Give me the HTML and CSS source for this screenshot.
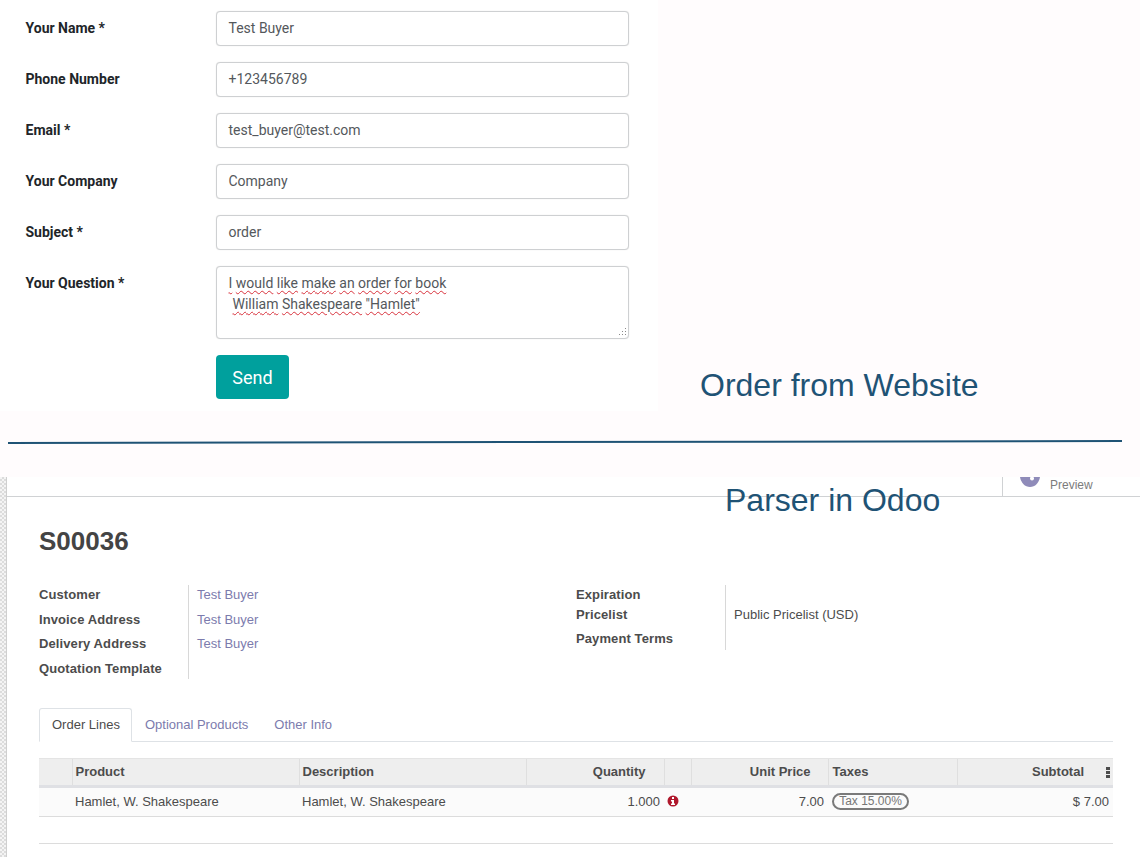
FILE: index.html
```html
<!DOCTYPE html>
<html lang="en">
<head>
<meta charset="utf-8">
<title>Order from Website</title>
<link rel="stylesheet" href="styles.css">
</head>
<body>
<section class="website">
  <form class="contact">
    <div class="field"><label class="field-label">Your Name *</label><div class="input">Test Buyer</div></div>
    <div class="field"><label class="field-label">Phone Number</label><div class="input">+123456789</div></div>
    <div class="field"><label class="field-label">Email *</label><div class="input">test_buyer@test.com</div></div>
    <div class="field"><label class="field-label">Your Company</label><div class="input">Company</div></div>
    <div class="field"><label class="field-label">Subject *</label><div class="input">order</div></div>
    <div class="field"><label class="field-label">Your Question *</label>
      <div class="input textarea">
        <div class="ta-line"><span class="misspelt">I</span> <span class="misspelt">would</span> <span class="misspelt">like</span> <span class="misspelt">make</span> <span class="misspelt">an</span> <span class="misspelt">order</span> <span class="misspelt">for</span> <span class="misspelt">book</span></div>
        <div class="ta-line ta-indent"><span class="misspelt">William</span> <span class="misspelt">Shakespeare</span> <span class="misspelt">"Hamlet"</span></div>
        <svg class="grip" width="10" height="10" viewBox="0 0 10 10"><g fill="#8a8a8a"><rect x="8" y="1" width="1" height="1"/><rect x="8" y="4" width="1" height="1"/><rect x="5" y="4" width="1" height="1"/><rect x="8" y="7" width="1" height="1"/><rect x="5" y="7" width="1" height="1"/><rect x="2" y="7" width="1" height="1"/></g></svg>
      </div>
    </div>
    <div class="field send-row"><span></span><button type="button" class="send">Send</button></div>
  </form>
  <h2 class="note note-order">Order from Website</h2>
  <svg class="divider" width="1140" height="7" viewBox="0 0 1140 7"><line x1="8" y1="5" x2="1122" y2="3" stroke="#1f5375" stroke-width="2"/></svg>
</section>

<section class="odoo">
  <div class="strip"></div>
  <div class="app">
    <div class="statbar">
      <div class="stat">
        <svg class="eye" width="20" height="10" viewBox="0 0 20 10"><path d="M0 0H20C19 6 15 10 10 10C5 10 1 6 0 0Z" fill="#8f8bb9"/><circle cx="12" cy="1.5" r="2" fill="#fff"/></svg>
        <span class="stat-text">Preview</span>
      </div>
    </div>
    <h2 class="note note-parser">Parser in Odoo</h2>
    <div class="sheet">
      <h1 class="order-no">S00036</h1>
      <div class="groups">
        <div class="group group-left">
          <div class="labels">
            <div>Customer</div><div>Invoice Address</div><div>Delivery Address</div><div>Quotation Template</div>
          </div>
          <div class="values">
            <div><a class="link">Test Buyer</a></div><div><a class="link">Test Buyer</a></div><div><a class="link">Test Buyer</a></div><div></div>
          </div>
        </div>
        <div class="group group-right">
          <div class="labels">
            <div>Expiration</div><div>Pricelist</div><div>Payment Terms</div>
          </div>
          <div class="values">
            <div></div><div>Public Pricelist (USD)</div><div></div>
          </div>
        </div>
      </div>
      <div class="tabs">
        <a class="tab tab-active">Order Lines</a>
        <a class="tab">Optional Products</a>
        <a class="tab">Other Info</a>
      </div>
      <table class="lines">
        <thead>
          <tr>
            <th class="c-handle"></th>
            <th class="c-product">Product</th>
            <th class="c-desc">Description</th>
            <th class="c-qty num">Quantity</th>
            <th class="c-info"></th>
            <th class="c-price num">Unit Price</th>
            <th class="c-tax">Taxes</th>
            <th class="c-sub num">Subtotal<svg class="kebab" width="4" height="11" viewBox="0 0 4 11"><g fill="#4c4c4c"><rect width="4" height="3" y="0"/><rect width="4" height="3" y="4"/><rect width="4" height="3" y="8"/></g></svg></th>
          </tr>
        </thead>
        <tbody>
          <tr>
            <td></td>
            <td>Hamlet, W. Shakespeare</td>
            <td>Hamlet, W. Shakespeare</td>
            <td class="num">1.000</td>
            <td class="info-cell"><svg class="info" width="12" height="12" viewBox="0 0 12 12"><circle cx="6" cy="6" r="5.5" fill="#b0182c"/><rect x="5" y="2" width="2" height="2" fill="#fff"/><path d="M4 5H7V8.5H8V10H4V8.5H5V6.5H4Z" fill="#fff"/></svg></td>
            <td class="num">7.00</td>
            <td class="tax-cell"><span class="pill">Tax 15.00%</span></td>
            <td class="num">$ 7.00</td>
          </tr>
        </tbody>
      </table>
      <div class="table-foot"></div>
    </div>
  </div>
</section>
</body>
</html>
```
FILE: styles.css
```css
* { box-sizing: border-box; }
html, body { margin: 0; padding: 0; background: #fff; }
body { width: 1140px; height: 857px; overflow: hidden; font-family: "Liberation Sans", Arial, sans-serif; }

.website { position: relative; height: 477px; background: #fffcfd; }
.contact { width: 658px; height: 411px; background: #fff; padding: 11px 29px 0 25.5px; display: flex; flex-direction: column; gap: 16px; font-family: Roboto, sans-serif; font-size: 14px; color: #4c4c4c; }
.field { display: grid; grid-template-columns: 190.5px 413px; }
.field-label { font-weight: 700; color: #212529; line-height: 35px; height: 35px; }
.input { height: 35px; border: 1px solid #ced0d2; border-radius: 4px; background: #fff; padding: 0 11.5px; line-height: 33px; color: #54585c; box-shadow: 0 0 1px #d8d8d8; }
.textarea { position: relative; height: 73px; padding: 6px 11.5px; line-height: 21px; }
.ta-line { height: 21px; }
.ta-indent { padding-left: 4px; }
.misspelt { text-decoration: underline wavy #d8323c 1px; text-underline-offset: 2px; }
.grip { position: absolute; right: 1px; bottom: 1px; }
.send { width: 73px; height: 44px; border: 0; border-radius: 4px; background: #00a09d; color: #fff; font-family: Roboto, sans-serif; font-size: 18px; padding: 0; }

.note { position: absolute; margin: 0; font-family: "Liberation Sans", Arial, sans-serif; font-weight: 400; font-size: 32px; line-height: 36px; color: #1f5375; white-space: nowrap; }
.note-order { left: 700px; top: 367px; }
.note-parser { left: 718px; top: 5px; z-index: 2; }
.divider { position: absolute; left: 0; top: 438px; }

.odoo { display: flex; height: 380px; }
.strip { width: 7px; flex: none; border-right: 1px solid #cfcfcf; background: repeating-conic-gradient(#dcdcdc 0 25%, #f4f4f4 0 50%) 0 0 / 4px 4px; }
.app { position: relative; flex: 1; min-width: 0; overflow: hidden; }
.statbar { height: 20px; border-bottom: 1px solid #d0d2d4; display: flex; justify-content: flex-end; padding-right: 1px; }
.stat { width: 137px; border-left: 1px solid #d0d2d4; display: flex; align-items: flex-start; gap: 10px; padding-left: 17px; }
.eye { flex: none; }
.stat-text { font-size: 12px; line-height: 14px; color: #7c7c7c; padding-top: 1px; }
.sheet { padding: 0 27px 0 32px; color: #4c4c4c; font-size: 13px; }
.order-no { margin: 29px 0 0; font-size: 26px; line-height: 30px; font-weight: 700; color: #444; }
.groups { display: flex; margin-top: 29px; }
.group { display: flex; align-items: flex-start; }
.group-left { width: 537px; }
.labels { font-weight: 700; letter-spacing: 0.1px; width: 149px; }
.labels div, .values div { height: 24.5px; line-height: 20px; }
.group-right .labels div, .group-right .values div { height: 22px; }
.group-right .labels div:first-child, .group-right .values div:first-child { height: 20px; }
.group-right .labels div:nth-child(2), .group-right .values div:nth-child(2) { height: 24px; }
.values { border-left: 1px solid #d8d8d8; padding-left: 8px; }
.group-left .values { height: 94px; }
.group-right .values { height: 65px; }
.link { color: #7c7bad; }

.tabs { display: flex; margin-top: 25px; height: 34px; border-bottom: 1px solid #dee2e6; }
.tab { height: 34px; padding: 0 12px; line-height: 32px; color: #7c7bad; border: 1px solid transparent; }
.tab-active { color: #4c4c4c; background: #fff; border-color: #dee2e6 #dee2e6 #fff; border-radius: 3px 3px 0 0; padding-right: 11px; }

.lines { width: 1074px; margin-top: 16px; border-collapse: collapse; table-layout: fixed; font-size: 13px; }
.lines th { height: 28px; padding: 0 3px 1px; background: #eeeeee; border-left: 1px solid #dfdfdf; border-top: 1px solid #e4e4e4; border-bottom: 3px solid #dfe0e4; text-align: left; font-weight: 700; color: #4c4c4c; }
.lines th:first-child { border-left: 0; }
.lines td { height: 30px; padding: 0 4px 2px 3px; background: #fbfbfb; border-bottom: 1px solid #dcdcdc; color: #4c4c4c; white-space: nowrap; }
.c-handle { width: 33px; }
.c-product, .c-desc { width: 227px; }
.c-qty { width: 138px; }
.c-info { width: 27px; }
.c-price { width: 137px; }
.c-tax { width: 129px; }
.c-sub { width: 156px; }
.lines th.num, .lines td.num { text-align: right; }
.lines th.c-qty { padding-right: 18px; }
.lines th.c-price { padding-right: 17px; }
.lines th.c-tax { padding-left: 4px; }
.lines th.c-sub { position: relative; padding-right: 29px; }
.kebab { position: absolute; right: 3px; top: 8px; }
.lines td.tax-cell { padding-left: 4px; }
.info { display: block; }
.pill { display: inline-block; width: 77px; height: 17px; border: 2px solid #7a7a7a; border-radius: 9px; font-size: 12px; line-height: 13px; text-align: center; color: #777; white-space: nowrap; }
.table-foot { height: 27px; border-bottom: 1px solid #dcdcdc; }
```
